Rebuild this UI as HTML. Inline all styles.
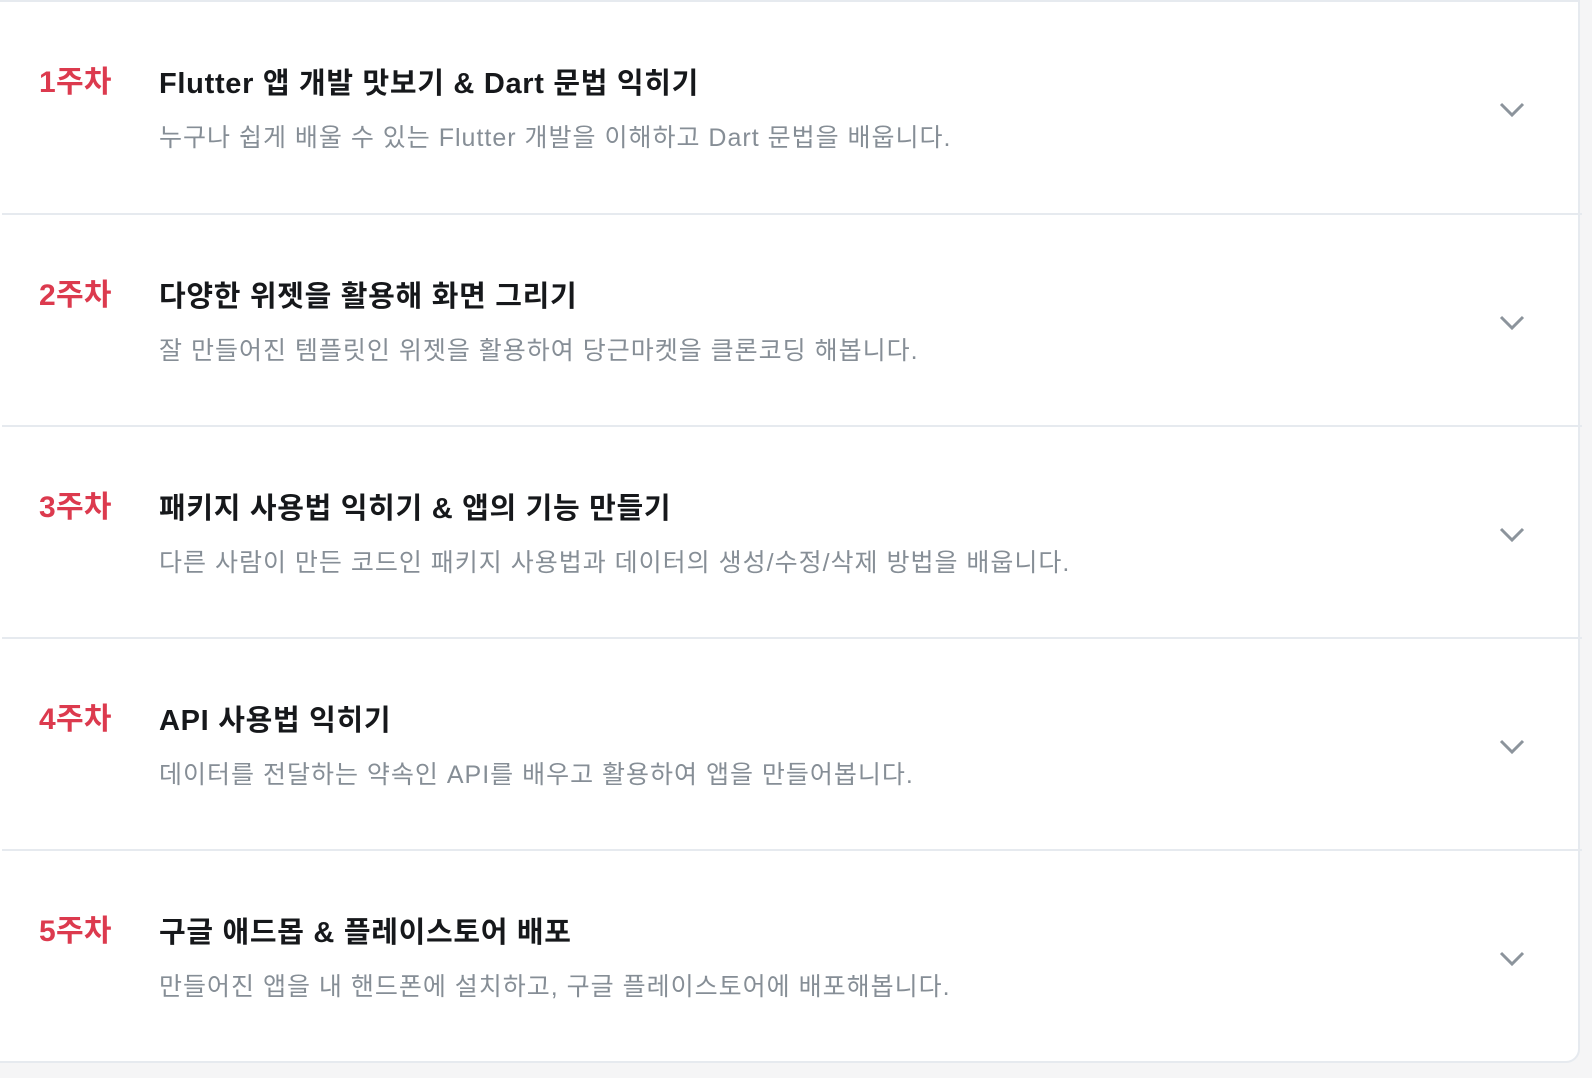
<!DOCTYPE html>
<html><head><meta charset="utf-8"><style>
html,body{margin:0;padding:0;width:1592px;height:1078px;overflow:hidden;background:#f5f5f6;font-family:"Liberation Sans","Noto Sans CJK KR",sans-serif;}
.card{position:absolute;left:-20px;top:0;width:1600px;height:1063px;box-sizing:border-box;background:#fff;border:2px solid #e6eaef;border-radius:0 0 14px 0;}
.row{position:absolute;left:20px;width:1580px;height:212px;border-top:2px solid #e6eaef;box-sizing:border-box;}
.row:first-child{border-top:none}
.wk{position:absolute;left:37px;top:61px;font-size:30px;font-weight:bold;color:#dc3a4e;line-height:40px;letter-spacing:0.3px}
.t{position:absolute;left:157px;top:62px;font-size:29px;font-weight:bold;color:#16181b;line-height:40px;letter-spacing:0.7px}
.d{position:absolute;left:157px;top:119px;font-size:25px;color:#868e96;line-height:34px;letter-spacing:1px}
.ch{position:absolute;left:1497px;top:98px}
</style></head><body>
<div class="card">
<div class="row" style="top:0;height:211px"><div class="wk">1주차</div><div class="t">Flutter 앱 개발 맛보기 &amp; Dart 문법 익히기</div><div class="d">누구나 쉽게 배울 수 있는 Flutter 개발을 이해하고 Dart 문법을 배웁니다.</div><svg class="ch" width="26" height="18" viewBox="0 0 26 18"><path d="M2 4 L13 15 L24 4" fill="none" stroke="#8c949c" stroke-width="3"/></svg></div>
<div class="row" style="top:211px"><div class="wk">2주차</div><div class="t">다양한 위젯을 활용해 화면 그리기</div><div class="d">잘 만들어진 템플릿인 위젯을 활용하여 당근마켓을 클론코딩 해봅니다.</div><svg class="ch" width="26" height="18" viewBox="0 0 26 18"><path d="M2 4 L13 15 L24 4" fill="none" stroke="#8c949c" stroke-width="3"/></svg></div>
<div class="row" style="top:423px"><div class="wk">3주차</div><div class="t">패키지 사용법 익히기 &amp; 앱의 기능 만들기</div><div class="d">다른 사람이 만든 코드인 패키지 사용법과 데이터의 생성/수정/삭제 방법을 배웁니다.</div><svg class="ch" width="26" height="18" viewBox="0 0 26 18"><path d="M2 4 L13 15 L24 4" fill="none" stroke="#8c949c" stroke-width="3"/></svg></div>
<div class="row" style="top:635px"><div class="wk">4주차</div><div class="t">API 사용법 익히기</div><div class="d">데이터를 전달하는 약속인 API를 배우고 활용하여 앱을 만들어봅니다.</div><svg class="ch" width="26" height="18" viewBox="0 0 26 18"><path d="M2 4 L13 15 L24 4" fill="none" stroke="#8c949c" stroke-width="3"/></svg></div>
<div class="row" style="top:847px;height:214px"><div class="wk">5주차</div><div class="t">구글 애드몹 &amp; 플레이스토어 배포</div><div class="d">만들어진 앱을 내 핸드폰에 설치하고, 구글 플레이스토어에 배포해봅니다.</div><svg class="ch" width="26" height="18" viewBox="0 0 26 18"><path d="M2 4 L13 15 L24 4" fill="none" stroke="#8c949c" stroke-width="3"/></svg></div>
</div>
</body></html>
